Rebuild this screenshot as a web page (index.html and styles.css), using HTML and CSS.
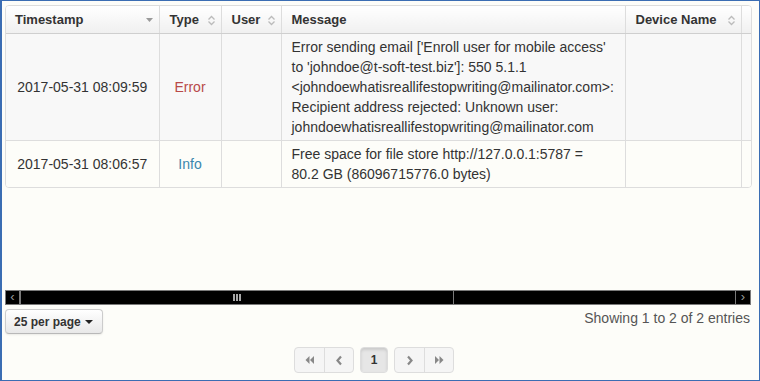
FILE: index.html
```html
<!DOCTYPE html>
<html lang="en">
<head>
    <meta charset="UTF-8">
    <title>Event Log</title>
    <link rel="stylesheet" href="styles.css">
</head>
<body>
    <div class="frame">
        <div class="scroll-body">
            <div class="table-panel">
                <table class="log-table">
                    <colgroup>
                        <col style="width:153px">
                        <col style="width:62px">
                        <col style="width:60px">
                        <col style="width:344px">
                        <col style="width:116px">
                        <col style="width:60px">
                    </colgroup>
                    <thead>
                        <tr>
                            <th>Timestamp
                                <svg class="sort" width="9" height="9" viewBox="0 0 9 9"><path d="M1 3h7L4.5 7z" fill="#9a9a9a"/></svg>
                            </th>
                            <th>Type
                                <svg class="sort" width="9" height="11" viewBox="0 0 9 11"><path d="M1.5 4.5 4.5 1.5 7.5 4.5M1.5 6.5 4.5 9.5 7.5 6.5" fill="none" stroke="#bbb" stroke-width="1.3"/></svg>
                            </th>
                            <th>User
                                <svg class="sort" width="9" height="11" viewBox="0 0 9 11"><path d="M1.5 4.5 4.5 1.5 7.5 4.5M1.5 6.5 4.5 9.5 7.5 6.5" fill="none" stroke="#bbb" stroke-width="1.3"/></svg>
                            </th>
                            <th>Message</th>
                            <th>Device Name
                                <svg class="sort" width="9" height="11" viewBox="0 0 9 11"><path d="M1.5 4.5 4.5 1.5 7.5 4.5M1.5 6.5 4.5 9.5 7.5 6.5" fill="none" stroke="#bbb" stroke-width="1.3"/></svg>
                            </th>
                            <th></th>
                        </tr>
                    </thead>
                    <tbody>
                        <tr class="odd">
                            <td class="center">2017-05-31 08:09:59</td>
                            <td class="center text-error">Error</td>
                            <td></td>
                            <td class="msg">Error sending email ['Enroll user for mobile access'<br>to 'johndoe@t-soft-test.biz']: 550 5.1.1<br>&lt;johndoewhatisreallifestopwriting@mailinator.com&gt;:<br>Recipient address rejected: Unknown user:<br>johndoewhatisreallifestopwriting@mailinator.com</td>
                            <td></td>
                            <td></td>
                        </tr>
                        <tr class="even">
                            <td class="center">2017-05-31 08:06:57</td>
                            <td class="center text-info">Info</td>
                            <td></td>
                            <td class="msg">Free space for file store http://127.0.0.1:5787 =<br>80.2 GB (86096715776.0 bytes)</td>
                            <td></td>
                            <td></td>
                        </tr>
                    </tbody>
                </table>
            </div>
        </div>

        <!-- horizontal scrollbar -->
        <div class="hscroll">
            <div class="sb-btn sb-left">&lsaquo;</div>
            <div class="sb-thumb"><span class="grip"></span><span class="grip"></span><span class="grip"></span></div>
            <div class="sb-track"></div>
            <div class="sb-btn sb-right">&rsaquo;</div>
        </div>

        <div class="footer">
            <button class="btn-length">25 per page <span class="caret"></span></button>
            <div class="info">Showing 1 to 2 of 2 entries</div>
        </div>

        <div class="pagination">
            <div class="pg-group">
                <span class="pg-btn">
                    <svg width="11" height="10" viewBox="0 0 11 10"><path d="M5.5 1 1.5 5 5.5 9zM10 1 6 5 10 9z" fill="#888"/></svg>
                </span>
                <span class="pg-btn">
                    <svg width="8" height="11" viewBox="0 0 8 11"><path d="M6 1.5 2.5 5.5 6 9.5" fill="none" stroke="#888" stroke-width="2.2"/></svg>
                </span>
            </div>
            <div class="pg-group">
                <span class="pg-btn active">1</span>
            </div>
            <div class="pg-group">
                <span class="pg-btn">
                    <svg width="8" height="11" viewBox="0 0 8 11"><path d="M2 1.5 5.5 5.5 2 9.5" fill="none" stroke="#888" stroke-width="2.2"/></svg>
                </span>
                <span class="pg-btn">
                    <svg width="11" height="10" viewBox="0 0 11 10"><path d="M1 1 5 5 1 9zM5.5 1 9.5 5 5.5 9z" fill="#888"/></svg>
                </span>
            </div>
        </div>
    </div>
</body>
</html>
```

FILE: styles.css
```css
* {
    box-sizing: border-box;
    margin: 0;
    padding: 0;
}

body {
    background: #fdfdf9;
    font-family: "Liberation Sans", Arial, sans-serif;
    color: #333;
}

.frame {
    width: 760px;
    height: 381px;
    border: 1px solid #3b6db3;
    border-left-width: 2px;
    background: #fdfdf9;
    padding: 4px 0 0 2px;
    overflow: hidden;
}

.scroll-body {
    height: 285px;
    width: 747px;
    padding-left: 1px;
}

.table-panel {
    border: 1px solid #ddd;
    border-radius: 4px;
    overflow: hidden;
    width: 747px;
}

.log-table {
    table-layout: fixed;
    border-collapse: collapse;
    width: 795px;
    font-size: 14px;
}

.log-table th {
    text-align: left;
    font-size: 13px;
    font-weight: bold;
    line-height: 18px;
    padding: 5px 10px 4px;
    background: linear-gradient(#ffffff, #f0f0f0);
    border-left: 1px solid #ddd;
    border-bottom: 1px solid #cfcfcf;
    position: relative;
    white-space: nowrap;
}

.log-table th:first-child {
    padding-left: 9px;
}

.log-table th:first-child,
.log-table td:first-child {
    border-left: none;
}

.sort {
    position: absolute;
    right: 5px;
    top: 9px;
}

.log-table td {
    padding: 3px 10px;
    line-height: 20px;
    border-left: 1px solid #ddd;
    border-top: 1px solid #ddd;
    white-space: nowrap;
    vertical-align: middle;
}

.log-table td.center {
    text-align: center;
    padding: 3px 4px;
}

.log-table tr.odd td {
    background: #f8f8f8;
}

.log-table tr.even td {
    background: #fdfdf9;
}

.text-error {
    color: #b94a48;
}

.text-info {
    color: #3a87ad;
}

.hscroll {
    display: flex;
    width: 746px;
    height: 15px;
    background: #000;
    border: 1px solid #7a7a7a;
    margin-left: 1px;
}

.sb-btn {
    width: 15px;
    color: #9a9a9a;
    font-size: 13px;
    line-height: 12px;
    text-align: center;
}

.sb-left {
    border-right: 2px solid #7a7a7a;
}

.sb-right {
    border-left: 1px solid #7a7a7a;
}

.sb-thumb {
    width: 433px;
    border-right: 1px solid #7a7a7a;
    display: flex;
    justify-content: center;
    align-items: center;
    gap: 1px;
}

.grip {
    width: 2px;
    height: 7px;
    background: #a8a8a8;
}

.sb-track {
    flex: 1;
}

.footer {
    display: flex;
    justify-content: space-between;
    align-items: flex-start;
    margin-top: 4px;
    width: 746px;
    padding-left: 1px;
}

.btn-length {
    height: 25px;
    width: 98px;
    font-family: "Liberation Sans", Arial, sans-serif;
    font-size: 12px;
    font-weight: bold;
    color: #333;
    border: 1px solid #ccc;
    border-bottom-color: #b8b8b8;
    border-radius: 4px;
    background: linear-gradient(#ffffff, #e8e8e8);
    box-shadow: 0 1px 2px rgba(0, 0, 0, 0.08);
    text-align: left;
    padding: 0 8px;
    white-space: nowrap;
}

.caret {
    display: inline-block;
    width: 0;
    height: 0;
    border-left: 4px solid transparent;
    border-right: 4px solid transparent;
    border-top: 4px solid #222;
    vertical-align: middle;
    margin-left: 1px;
}

.info {
    font-size: 14px;
    color: #555;
    line-height: 16px;
    margin-top: 1px;
}

.pagination {
    display: flex;
    justify-content: center;
    gap: 6px;
    margin-top: 13px;
    padding-right: 15px;
}

.pg-group {
    display: flex;
    border: 1px solid #ddd;
    border-radius: 4px;
    background: #f5f5f5;
}

.pg-btn {
    display: flex;
    align-items: center;
    justify-content: center;
    width: 29px;
    height: 24px;
    border-left: 1px solid #ddd;
    font-size: 12px;
    font-weight: bold;
    color: #333;
}

.pg-btn:first-child {
    border-left: none;
}

.pg-btn.active {
    width: 26px;
    background: #e6e6e6;
    border-radius: 3px;
    box-shadow: inset 0 2px 3px rgba(0, 0, 0, 0.12);
}
```
